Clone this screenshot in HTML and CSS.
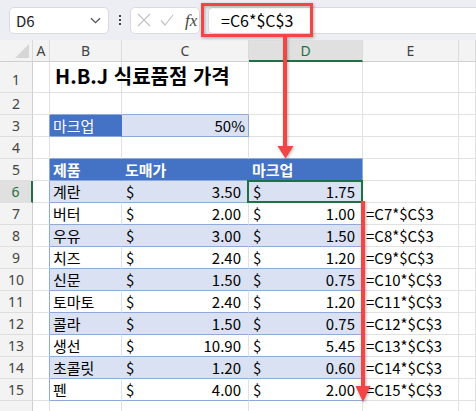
FILE: index.html
```html
<!DOCTYPE html>
<html lang="ko">
<head>
<meta charset="utf-8">
<title>H.B.J 식료품점 가격</title>
<link rel="stylesheet" href="styles.css">
</head>
<body>
<div class="app">
  <div class="toolbar">
    <div class="namebox"><span>D6</span><svg class="chev" width="11" height="7" viewBox="0 0 11 7"><path d="M1 1.2l4.5 4.5 4.5-4.5" fill="none" stroke="#555" stroke-width="1.3"/></svg></div>
    <div class="dots"><i></i><i></i><i></i></div>
    <div class="fxbox">
      <svg class="ico" width="14" height="14" viewBox="0 0 14 14"><path d="M1 1l12 12M13 1L1 13" stroke="#c3c3c3" stroke-width="1.2" fill="none"/></svg>
      <svg class="ico" width="14" height="14" viewBox="0 0 14 14"><path d="M1 7.5l4 4.5L13 2" stroke="#c3c3c3" stroke-width="1.2" fill="none"/></svg>
      <span class="fx">fx</span>
    </div>
    <div class="formula">=C6*$C$3</div>
  </div>

  <div class="sheet">
    <div class="row hrow">
      <div class="corner"></div><div class="ch">A</div><div class="ch">B</div><div class="ch">C</div><div class="ch sel">D</div><div class="ch">E</div><div class="ch"></div>
    </div>
    <div class="row r1">
      <div class="rh">1</div><div class="c"></div><div class="c title nb"><span>H.B.J 식료품점 가격</span></div><div class="c"></div><div class="c"></div><div class="c"></div><div class="c"></div>
    </div>
    <div class="row">
      <div class="rh">2</div><div class="c"></div><div class="c bb"></div><div class="c bb"></div><div class="c"></div><div class="c"></div><div class="c"></div>
    </div>
    <div class="row">
      <div class="rh">3</div><div class="c br"></div><div class="c hd bb"><span>마크업</span></div><div class="c band bb br num"><span>50%</span></div><div class="c"></div><div class="c"></div><div class="c"></div>
    </div>
    <div class="row">
      <div class="rh">4</div><div class="c"></div><div class="c bb"></div><div class="c bb"></div><div class="c bb"></div><div class="c"></div><div class="c"></div>
    </div>
    <div class="row">
      <div class="rh">5</div><div class="c br"></div><div class="c hd bb strong"><span>제품</span></div><div class="c hd bb strong"><span>도매가</span></div><div class="c hd bb br strong"><span>마크업</span></div><div class="c"></div><div class="c"></div>
    </div>
    <div class="row">
      <div class="rh sel">6</div><div class="c br"></div><div class="c band bb"><span>계란</span></div><div class="c band bb acc"><span>$</span><span>3.50</span></div><div class="c band bb br acc cur"><span>$</span><span>1.75</span></div><div class="c"></div><div class="c"></div>
    </div>
    <div class="row">
      <div class="rh">7</div><div class="c br"></div><div class="c bb"><span>버터</span></div><div class="c bb acc"><span>$</span><span>2.00</span></div><div class="c bb br acc"><span>$</span><span>1.00</span></div><div class="c f"><span>=C7*$C$3</span></div><div class="c"></div>
    </div>
    <div class="row">
      <div class="rh">8</div><div class="c br"></div><div class="c band bb"><span>우유</span></div><div class="c band bb acc"><span>$</span><span>3.00</span></div><div class="c band bb br acc"><span>$</span><span>1.50</span></div><div class="c f"><span>=C8*$C$3</span></div><div class="c"></div>
    </div>
    <div class="row">
      <div class="rh">9</div><div class="c br"></div><div class="c bb"><span>치즈</span></div><div class="c bb acc"><span>$</span><span>2.40</span></div><div class="c bb br acc"><span>$</span><span>1.20</span></div><div class="c f"><span>=C9*$C$3</span></div><div class="c"></div>
    </div>
    <div class="row">
      <div class="rh">10</div><div class="c br"></div><div class="c band bb"><span>신문</span></div><div class="c band bb acc"><span>$</span><span>1.50</span></div><div class="c band bb br acc"><span>$</span><span>0.75</span></div><div class="c f"><span>=C10*$C$3</span></div><div class="c"></div>
    </div>
    <div class="row">
      <div class="rh">11</div><div class="c br"></div><div class="c bb"><span>토마토</span></div><div class="c bb acc"><span>$</span><span>2.40</span></div><div class="c bb br acc"><span>$</span><span>1.20</span></div><div class="c f"><span>=C11*$C$3</span></div><div class="c"></div>
    </div>
    <div class="row">
      <div class="rh">12</div><div class="c br"></div><div class="c band bb"><span>콜라</span></div><div class="c band bb acc"><span>$</span><span>1.50</span></div><div class="c band bb br acc"><span>$</span><span>0.75</span></div><div class="c f"><span>=C12*$C$3</span></div><div class="c"></div>
    </div>
    <div class="row">
      <div class="rh">13</div><div class="c br"></div><div class="c bb"><span>생선</span></div><div class="c bb acc"><span>$</span><span>10.90</span></div><div class="c bb br acc"><span>$</span><span>5.45</span></div><div class="c f"><span>=C13*$C$3</span></div><div class="c"></div>
    </div>
    <div class="row">
      <div class="rh">14</div><div class="c br"></div><div class="c band bb"><span>초콜릿</span></div><div class="c band bb acc"><span>$</span><span>1.20</span></div><div class="c band bb br acc"><span>$</span><span>0.60</span></div><div class="c f"><span>=C14*$C$3</span></div><div class="c"></div>
    </div>
    <div class="row">
      <div class="rh">15</div><div class="c br"></div><div class="c bb"><span>펜</span></div><div class="c bb acc"><span>$</span><span>4.00</span></div><div class="c bb br acc"><span>$</span><span>2.00</span></div><div class="c f"><span>=C15*$C$3</span></div><div class="c"></div>
    </div>
    <div class="row">
      <div class="rh"></div><div class="c"></div><div class="c"></div><div class="c"></div><div class="c"></div><div class="c"></div><div class="c"></div>
    </div>
  </div>

  <svg class="overlay" width="476" height="411" viewBox="0 0 476 411">
    <g class="red">
      <rect x="202.5" y="4.5" width="109" height="31" fill="none" stroke="#f24646" stroke-width="3"/>
      <rect x="283" y="36" width="4" height="112" fill="#f24646"/>
      <path d="M277.5 146h16l-8 12.5z" fill="#f24646"/>
      <rect x="361" y="201" width="4" height="187" fill="#f24646"/>
      <path d="M355.5 386h15l-7.5 16z" fill="#f24646"/>
    </g>
  </svg>
</div>
</body>
</html>
```

FILE: styles.css
```css
* { box-sizing: border-box; margin: 0; padding: 0; }

body {
  margin: 0;
  background: #ffffff;
  font-family: "Noto Sans CJK KR", "Noto Sans", sans-serif;
  color: #000;
}

.app {
  position: relative;
  width: 476px;
  height: 411px;
  overflow: hidden;
}

/* ---------- formula bar ---------- */
.toolbar {
  height: 40px;
  background: #eceef3;
  display: flex;
  align-items: center;
  padding-left: 9px;
}

.namebox {
  width: 100px;
  height: 27px;
  background: #fff;
  border: 1px solid #d9dbe0;
  border-radius: 5px;
  display: flex;
  align-items: center;
  justify-content: space-between;
  padding: 0 7px 0 6px;
  font-size: 15px;
  line-height: 1;
  color: #222;
}

.dots {
  width: 21px;
  display: flex;
  flex-direction: column;
  align-items: center;
  gap: 2px;
}
.dots i {
  display: block;
  width: 2px;
  height: 2px;
  background: #444;
}

.fxbox {
  width: 70px;
  height: 27px;
  background: #fff;
  border: 1px solid #d9dbe0;
  border-radius: 5px;
  display: flex;
  align-items: center;
  padding-left: 6px;
  gap: 9px;
}
.fx {
  font-family: "Liberation Serif", "DejaVu Serif", serif;
  font-style: italic;
  font-size: 17px;
  line-height: 1;
  color: #444;
  margin-left: 2px;
}

.formula {
  margin-left: 8px;
  flex: 1;
  height: 27px;
  background: #fff;
  border: 1px solid #d9dbe0;
  border-right: none;
  border-radius: 5px 0 0 5px;
  padding-left: 12px;
  display: flex;
  align-items: center;
  font-size: 16px;
  line-height: 1;
}

/* ---------- sheet grid ---------- */
.row {
  display: grid;
  grid-template-columns: 33px 17px 72px 127px 114px 96px 1fr;
  height: 22px;
}
.row.r1 { height: 31px; }

.hrow > div {
  background: #f3f3f3;
  border-right: 1px solid #dadada;
  border-bottom: 1px solid #cfcfcf;
}
.corner { position: relative; }
.corner::after {
  content: "";
  position: absolute;
  right: 3px;
  bottom: 3px;
  border-style: solid;
  border-width: 0 0 14px 14px;
  border-color: transparent transparent #d6d6d6 transparent;
}
.ch {
  display: flex;
  align-items: center;
  justify-content: center;
  font-family: "Noto Sans", sans-serif;
  font-size: 14px;
  color: #444;
}
.hrow .ch.sel {
  background: #e0e0e0;
  color: #1e7145;
  border-bottom: 2px solid #1e7145;
}

.rh {
  background: #f3f3f3;
  border-right: 1px solid #cfcfcf;
  border-bottom: 1px solid #dedede;
  display: flex;
  align-items: center;
  justify-content: center;
  font-family: "Noto Sans", sans-serif;
  font-size: 14px;
  color: #444;
}
.r1 .rh { align-items: flex-end; padding-bottom: 3px; }
.rh.sel {
  background: #e0e0e0;
  color: #1e7145;
  border-right: 2px solid #1e7145;
}

.c {
  border-right: 1px solid #e1e1e1;
  border-bottom: 1px solid #e1e1e1;
  display: flex;
  align-items: center;
  padding: 0 3px;
  font-size: 15px;
  line-height: 1;
  white-space: nowrap;
  min-width: 0;
}

.title {
  align-items: flex-end;
  padding-bottom: 6px;
  padding-left: 5px;
  font-size: 20px;
  font-weight: 700;
  overflow: visible;
}

.bb { border-bottom-color: #8ea9db; }
.br { border-right-color: #8ea9db; }

.hd {
  background: #4472c4;
  color: #fff;
  border-right-color: #4472c4;
  border-bottom-color: #8ea9db;
}
.hd.br { border-right-color: #8ea9db; }
.strong { font-weight: 700; }

.band {
  background: #d9e1f2;
  border-right-color: #d9e1f2;
}
.band.br { border-right-color: #8ea9db; }

.num { justify-content: flex-end; }

.acc {
  justify-content: space-between;
  padding: 0 7px 0 4px;
}

.f {
  overflow: visible;
  padding-left: 3px;
}

.cur { position: relative; }
.cur::after {
  content: "";
  position: absolute;
  left: -2px;
  top: -1px;
  right: -1px;
  bottom: -1px;
  border: 2px solid #1e7145;
}

/* ---------- annotation overlay ---------- */
.overlay {
  position: absolute;
  left: 0;
  top: 0;
  pointer-events: none;
}
.red {
  filter: drop-shadow(1px 1px 1.5px rgba(0, 0, 0, 0.3));
}
```
